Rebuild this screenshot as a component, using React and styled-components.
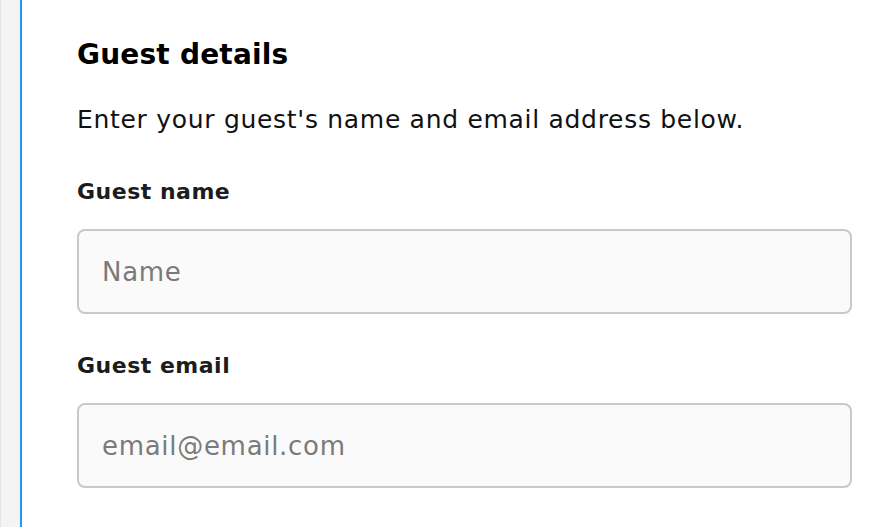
import React from "react";
import styled, { createGlobalStyle } from "styled-components";

const GlobalStyle = createGlobalStyle`
  html, body {
    margin: 0;
    padding: 0;
    background: #ffffff;
  }
  body {
    font-family: "DejaVu Sans", "Noto Sans", sans-serif;
    color: #111111;
  }
`;

const Page = styled.div`
  display: flex;
  min-height: 527px;
  width: 882px;
`;

const Rail = styled.div`
  width: 20px;
  flex-shrink: 0;
  background: #f4f4f4;
  border-left: 1px solid #e4e4e4;
  box-sizing: border-box;
`;

const Panel = styled.section`
  flex: 1;
  border-left: 2px solid #2196f3;
  padding: 35px 30px 0 55px;
`;

const Heading = styled.h2`
  margin: 0;
  font-size: 28px;
  line-height: 40px;
  font-weight: 700;
  letter-spacing: 0.2px;
  color: #000;
`;

const Intro = styled.p`
  margin: 28px 0 0;
  font-size: 25px;
  line-height: 34px;
  font-weight: 400;
  letter-spacing: 0.7px;
  color: #111;
`;

const Field = styled.div`
  display: flex;
  flex-direction: column;
  gap: 23px;
  margin-top: ${({ $first }) => ($first ? "41px" : "38px")};
`;

const Label = styled.label`
  font-size: 22px;
  line-height: 28px;
  font-weight: 700;
  letter-spacing: 0.5px;
  color: #1c1c1c;
`;

const Input = styled.input`
  box-sizing: border-box;
  height: 85px;
  width: 100%;
  border: 2px solid #c9c9c9;
  border-radius: 8px;
  background: #fafafa;
  padding: 0 23px;
  font-family: inherit;
  font-size: 26px;
  letter-spacing: 0.7px;
  color: #222;
  outline: none;
  &::placeholder {
    color: #7a7a7a;
  }
`;

export default function App() {
  return (
    <>
      <GlobalStyle />
      <Page>
        <Rail />
        <Panel>
          <Heading>Guest details</Heading>
          <Intro>Enter your guest's name and email address below.</Intro>
          <Field $first>
            <Label htmlFor="guest-name">Guest name</Label>
            <Input id="guest-name" placeholder="Name" />
          </Field>
          <Field>
            <Label htmlFor="guest-email">Guest email</Label>
            <Input id="guest-email" type="email" placeholder="email@email.com" />
          </Field>
        </Panel>
      </Page>
    </>
  );
}
